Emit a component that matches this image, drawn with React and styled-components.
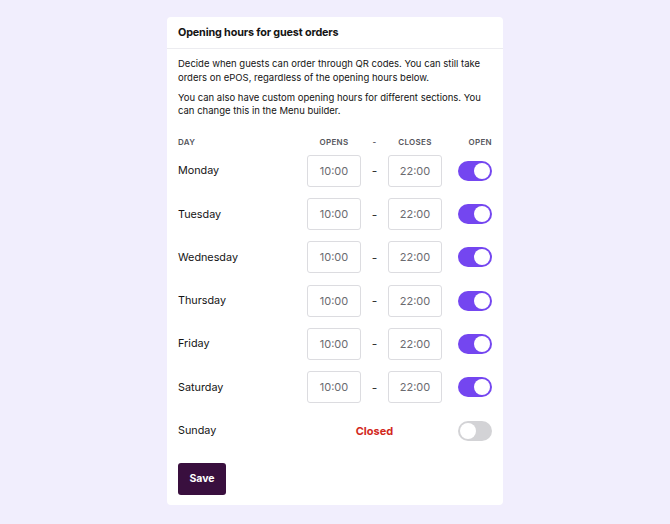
import React, { useState } from "react";
import styled, { createGlobalStyle } from "styled-components";

const GlobalStyle = createGlobalStyle`
  html, body {
    margin: 0;
    padding: 0;
    background: #f1eefd;
    font-family: Inter, "Noto Sans", "Liberation Sans", sans-serif;
    color: #141414;
  }
`;

const Page = styled.div`
  display: flex;
  justify-content: center;
  padding: 17px 0;
`;

const Card = styled.section`
  width: 336px;
  background: #fff;
  border-radius: 4px;
`;

const CardHeader = styled.header`
  padding: 9px 11px 8px;
  border-bottom: 1px solid #ececf0;
  font-size: 10.8px;
  font-weight: 700;
  line-height: 14px;
  letter-spacing: -0.15px;
`;

const CardBody = styled.div`
  padding: 8px 11px 10px;
`;

const Text = styled.p`
  margin: 0 0 6.5px;
  font-size: 9.5px;
  line-height: 13.5px;
`;

const Table = styled.div`
  margin-top: 19px;
  display: grid;
  grid-template-columns: 129px 54px 27px 54px 50px;
  row-gap: 11.3px;
  align-items: center;
`;

const HeadCell = styled.div`
  font-size: 8px;
  font-weight: 600;
  color: #55555c;
  letter-spacing: 0.3px;
  text-align: ${(p) => p.align || "center"};
  margin-bottom: -3px;
`;

const DayName = styled.div`
  font-size: 10.8px;
  height: 32px;
  display: flex;
  align-items: center;
`;

const TimeBox = styled.div`
  height: 30px;
  border: 1px solid #dcdce0;
  border-radius: 3px;
  display: flex;
  align-items: center;
  justify-content: center;
  font-size: 11px;
  color: #6b6b70;
`;

const Dash = styled.div`
  text-align: center;
  font-size: 12px;
  color: #333;
`;

const Closed = styled.div`
  grid-column: 2 / 5;
  text-align: center;
  font-size: 11px;
  font-weight: 700;
  color: #d2291d;
`;

const ToggleCell = styled.div`
  display: flex;
  justify-content: flex-end;
`;

const Toggle = styled.button`
  width: 34px;
  height: 20px;
  border: none;
  border-radius: 10px;
  padding: 2px;
  cursor: pointer;
  background: ${(p) => (p.on ? "#7446f0" : "#d3d3d6")};
  display: flex;
  justify-content: ${(p) => (p.on ? "flex-end" : "flex-start")};

  &::after {
    content: "";
    width: 16px;
    height: 16px;
    border-radius: 50%;
    background: #fff;
  }
`;

const SaveButton = styled.button`
  margin-top: 16px;
  width: 48px;
  height: 32px;
  border: none;
  border-radius: 3px;
  background: #390f3e;
  color: #fff;
  font-family: inherit;
  font-size: 10.5px;
  font-weight: 700;
  cursor: pointer;
`;

const initialDays = [
  { name: "Monday", open: true },
  { name: "Tuesday", open: true },
  { name: "Wednesday", open: true },
  { name: "Thursday", open: true },
  { name: "Friday", open: true },
  { name: "Saturday", open: true },
  { name: "Sunday", open: false },
];

export default function App() {
  const [days, setDays] = useState(initialDays);

  const flip = (name) =>
    setDays((prev) =>
      prev.map((d) => (d.name === name ? { ...d, open: !d.open } : d))
    );

  return (
    <Page>
      <GlobalStyle />
      <Card>
        <CardHeader>Opening hours for guest orders</CardHeader>
        <CardBody>
          <Text>
            Decide when guests can order through QR codes. You can still take
            orders on ePOS, regardless of the opening hours below.
          </Text>
          <Text>
            You can also have custom opening hours for different sections. You
            can change this in the Menu builder.
          </Text>
          <Table>
            <HeadCell align="left">DAY</HeadCell>
            <HeadCell>OPENS</HeadCell>
            <HeadCell>-</HeadCell>
            <HeadCell>CLOSES</HeadCell>
            <HeadCell align="right">OPEN</HeadCell>
            {days.map((d) => (
              <React.Fragment key={d.name}>
                <DayName>{d.name}</DayName>
                {d.open ? (
                  <>
                    <TimeBox>10:00</TimeBox>
                    <Dash>-</Dash>
                    <TimeBox>22:00</TimeBox>
                  </>
                ) : (
                  <Closed>Closed</Closed>
                )}
                <ToggleCell>
                  <Toggle on={d.open} onClick={() => flip(d.name)} />
                </ToggleCell>
              </React.Fragment>
            ))}
          </Table>
          <SaveButton>Save</SaveButton>
        </CardBody>
      </Card>
    </Page>
  );
}
